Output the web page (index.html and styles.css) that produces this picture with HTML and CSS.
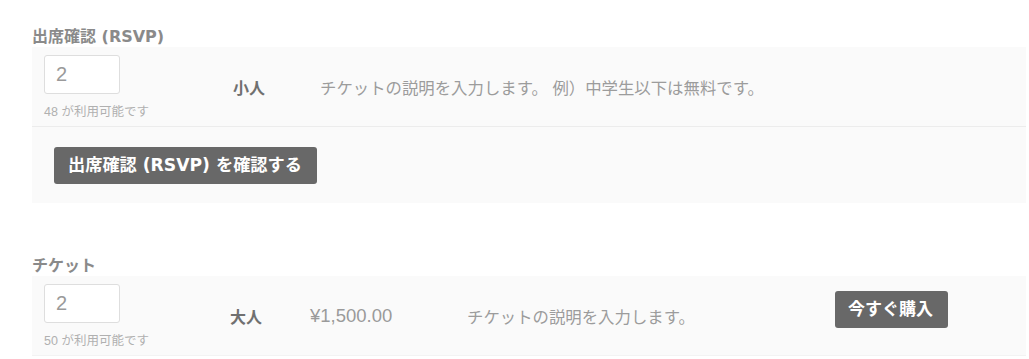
FILE: index.html
```html
<!DOCTYPE html>
<html lang="ja">
<head>
<meta charset="utf-8">
<title>チケット</title>
<link rel="stylesheet" href="styles.css">
</head>
<body>
<div class="page">
  <h3 class="section-title first">出席確認 (RSVP)</h3>
  <div class="box">
    <div class="row rsvp-row">
      <div class="qty">
        <input class="qty-input" type="text" value="2">
        <div class="avail">48 が利用可能です</div>
      </div>
      <div class="name rsvp-name">小人</div>
      <div class="desc">チケットの説明を入力します。 例）中学生以下は無料です。</div>
    </div>
    <div class="confirm">
      <button class="btn">出席確認 (RSVP) を確認する</button>
    </div>
  </div>

  <h3 class="section-title second">チケット</h3>
  <div class="box">
    <div class="row ticket-row">
      <div class="qty">
        <input class="qty-input" type="text" value="2">
        <div class="avail">50 が利用可能です</div>
      </div>
      <div class="name ticket-name">大人</div>
      <div class="price">¥1,500.00</div>
      <div class="desc ticket-desc">チケットの説明を入力します。</div>
      <div class="buy-cell">
        <button class="btn buy">今すぐ購入</button>
      </div>
    </div>
  </div>
</div>
</body>
</html>
```

FILE: styles.css
```css
* { box-sizing: border-box; }
html, body { margin: 0; padding: 0; background: #fff; }
body {
  font-family: "Liberation Sans", "Noto Sans CJK JP", sans-serif;
  color: #999;
}
.page {
  padding: 0 3px 0 32px;
}
.section-title {
  margin: 0;
  font-family: "DejaVu Sans", "Noto Sans CJK JP", sans-serif;
  font-size: 16px;
  line-height: 20px;
  font-weight: bold;
  color: #8a8a8a;
}
.section-title.first { margin-top: 27px; }
.section-title.second { margin-top: 53px; }
.box {
  background: #fafafa;
}
.row {
  display: flex;
  align-items: center;
}
.rsvp-row {
  border-bottom: 1px solid #ececec;
}
.ticket-row {
  border-bottom: 1px solid #f3f3f3;
}
.qty {
  flex: none;
  padding: 8px 0 6px 12px;
}
.rsvp-row .qty { width: 201px; }
.ticket-row .qty { width: 198px; }
.qty-input {
  display: block;
  width: 76px;
  height: 39px;
  border: 1px solid #dedede;
  border-radius: 3px;
  background: #fff;
  padding: 0 11px;
  font-family: "Liberation Sans", sans-serif;
  font-size: 20px;
  color: #9a9a9a;
  outline: none;
}
.avail {
  margin-top: 10px;
  font-size: 12.5px;
  line-height: 16px;
  color: #b0b0b0;
}
.name {
  flex: none;
  font-size: 16px;
  font-weight: bold;
  color: #707070;
}
.rsvp-name { width: 87px; }
.ticket-name { width: 80px; }
.price {
  flex: none;
  width: 157px;
  font-size: 18.5px;
  color: #9a9a9a;
}
.desc {
  font-size: 16.4px;
  color: #9c9c9c;
}
.ticket-desc {
  flex: none;
  width: 368px;
}
.buy-cell {
  align-self: flex-start;
  padding-top: 15px;
}
.confirm {
  padding: 20px 0 19px 22px;
}
.btn {
  display: inline-block;
  height: 37px;
  padding: 0 15px 0 14px;
  border: none;
  border-radius: 3px;
  background: #686868;
  color: #fff;
  font-family: "DejaVu Sans", "Noto Sans CJK JP", sans-serif;
  font-size: 17.2px;
  font-weight: bold;
  line-height: 37px;
}
.buy {
  padding: 0 15px 0 13px;
  font-size: 17px;
}
```
